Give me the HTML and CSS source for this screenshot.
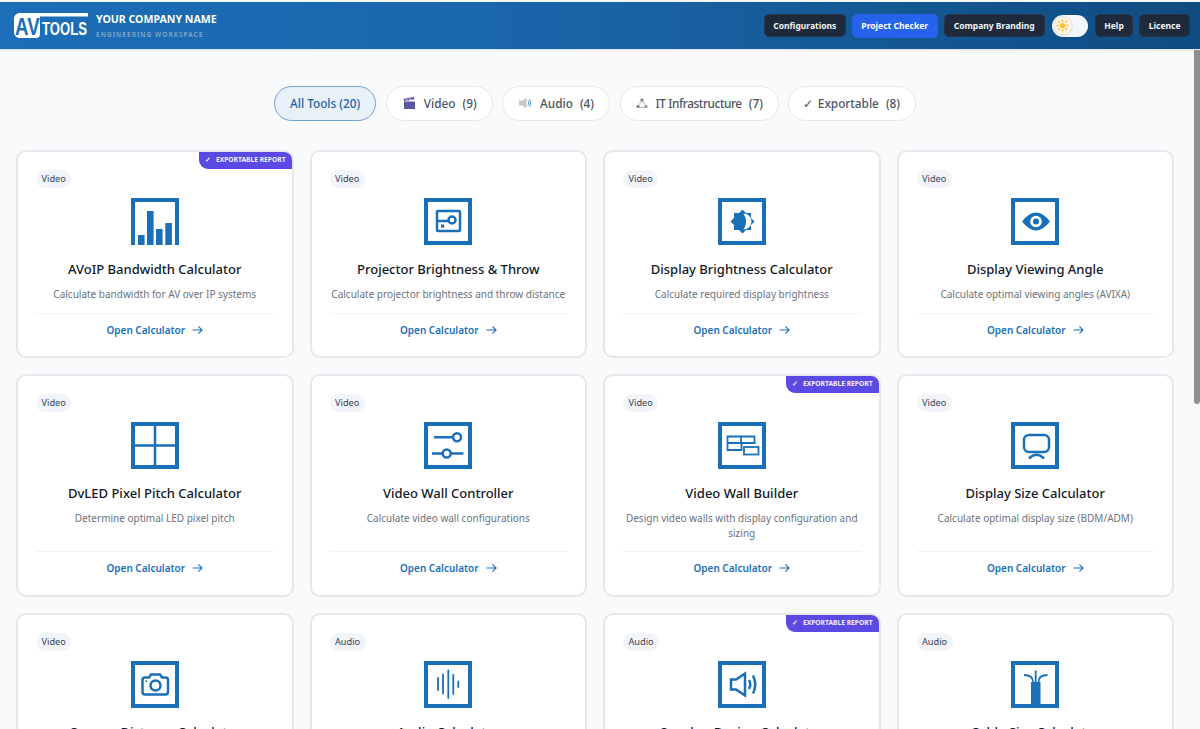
FILE: index.html
```html
<!DOCTYPE html>
<html>
<head>
    <title>AV Tools</title>
    <link rel="stylesheet" href="styles.css">
</head>
<body>
    <header class="topbar">
        <div class="brand">
            <svg class="logo" width="74" height="31" viewBox="0 -2 74 31">
                <path class="logo-shape" d="M6 1H74V4.500H26V22Q26 26 22 26H6C2.500 26 0 23.500 0 20V7C0 3.500 2.500 1 6 1Z"/>
                <text class="logo-av" transform="translate(1 23) scale(.78 1)">AV</text>
                <text class="logo-tools" transform="translate(28 22.500) scale(.73 1)">TOOLS</text>
            </svg>
            <div class="brand-text">
                <div class="company">YOUR COMPANY NAME</div>
                <div class="workspace">ENGINEERING WORKSPACE</div>
            </div>
        </div>
        <nav class="top-nav">
            <button class="nav-btn">Configurations</button>
            <button class="nav-btn nav-btn-primary">Project Checker</button>
            <button class="nav-btn nav-btn-wide">Company Branding</button>
            <div class="theme-toggle">
                <span class="theme-knob">
                    <svg width="13" height="13" viewBox="0 0 14 14"><circle cx="7" cy="7" r="2.800" fill="#fbbf24"/><path d="M7 .8V2.600M7 11.400V13.200M.8 7H2.600M11.400 7H13.200M2.600 2.600L3.900 3.900M10.100 10.100L11.400 11.400M2.600 11.400L3.900 10.100M10.100 3.900L11.400 2.600" stroke="#f59e0b" stroke-width="1.300"/></svg>
                </span>
            </div>
            <button class="nav-btn">Help</button>
            <button class="nav-btn">Licence</button>
        </nav>
    </header>

    <main class="content">
        <div class="filters">
            <button class="filter filter-active">All Tools (20)</button>
            <button class="filter">
                <svg width="14" height="14" viewBox="0 0 14 14"><path d="M2 5.500H13V13H2Z" fill="#5b5aa0"/><path d="M1.500 2.800L12 .8L12.500 3.300L2 5.300Z" fill="#6d5fb0"/><path d="M4 2.400L5.200 4.700M7.500 1.800L8.700 4" stroke="#ddd" stroke-width="1"/></svg>
                <span>Video</span><span>(9)</span>
            </button>
            <button class="filter">
                <svg width="14" height="14" viewBox="0 0 14 14"><path d="M1 4.500H4.500L8.500 1.500V12.500L4.500 9.500H1Z" fill="#c3c8cf"/><path d="M10 4.500Q11.500 7 10 9.500M11.600 3Q13.800 7 11.600 11" fill="none" stroke="#5f9bd6" stroke-width="1"/></svg>
                <span>Audio</span><span>(4)</span>
            </button>
            <button class="filter">
                <svg width="12" height="12" viewBox="0 0 12 12"><circle cx="6" cy="3" r="1.600" fill="#6b7280"/><circle cx="2" cy="9.500" r="1.600" fill="#6b7280"/><circle cx="10" cy="9.500" r="1.600" fill="#8b93a0"/><path d="M6 3L2 9.500M6 3L10 9.500M2 10.500H10" stroke="#9ca3af" stroke-width=".8" fill="none"/></svg>
                <span class="filter-long">IT Infrastructure</span><span>(7)</span>
            </button>
            <button class="filter">
                <span class="filter-check">✓</span>
                <span>Exportable</span><span>(8)</span>
            </button>
        </div>

        <div class="tool-grid">
            <article class="tool-card">
                <div class="export-badge"><span class="badge-check">✓</span>EXPORTABLE REPORT</div>
                <span class="tag">Video</span>
                <svg class="tool-icon" viewBox="0 0 48 47">
                    <path class="line thick" d="M2 47V2H46V47"/>
                    <path class="solid" d="M7 37H13.600V47H7ZM16 13H22.600V47H16ZM25 31H31.600V47H25ZM34.300 25H40.900V47H34.300Z"/>
                </svg>
                <h3>AVoIP Bandwidth Calculator</h3>
                <p>Calculate bandwidth for AV over IP systems</p>
                <a class="open-link">Open Calculator <svg class="arrow" viewBox="0 0 12 10"><path d="M.5 5H11M7 1L11 5L7 9"/></svg></a>
            </article>
            <article class="tool-card">
                <span class="tag">Video</span>
                <svg class="tool-icon" viewBox="0 0 48 47">
                    <rect class="line thick" x="2" y="2" width="44" height="43"/>
                    <rect class="line" x="13" y="13" width="23" height="20" rx="1"/>
                    <path class="line" d="M13 23H24"/>
                    <circle class="line" cx="28" cy="22" r="3.500"/>
                    <rect class="solid" x="17" y="26.500" width="3.200" height="3.200"/>
                </svg>
                <h3>Projector Brightness &amp; Throw</h3>
                <p>Calculate projector brightness and throw distance</p>
                <a class="open-link">Open Calculator <svg class="arrow" viewBox="0 0 12 10"><path d="M.5 5H11M7 1L11 5L7 9"/></svg></a>
            </article>
            <article class="tool-card">
                <span class="tag">Video</span>
                <svg class="tool-icon" viewBox="0 0 48 47">
                    <rect class="line thick" x="2" y="2" width="44" height="43"/>
                    <path class="solid" d="M24.500 11.500L28 15H33V20L36.500 23.500L33 27V32H28L24.500 35.500L21 32H16V27L12.500 23.500L16 20V15H21Z"/>
                    <path class="cut" d="M25.500 15.500A8 8 0 0 1 25.500 31.500Q30.500 23.500 25.500 15.500Z"/>
                </svg>
                <h3>Display Brightness Calculator</h3>
                <p>Calculate required display brightness</p>
                <a class="open-link">Open Calculator <svg class="arrow" viewBox="0 0 12 10"><path d="M.5 5H11M7 1L11 5L7 9"/></svg></a>
            </article>
            <article class="tool-card">
                <span class="tag">Video</span>
                <svg class="tool-icon" viewBox="0 0 48 47">
                    <rect class="line thick" x="2" y="2" width="44" height="43"/>
                    <path class="solid" d="M11 23.500Q25 5.500 39 23.500Q25 41.500 11 23.500Z"/>
                    <circle class="cut" cx="25" cy="23.500" r="5.800"/>
                    <circle class="solid" cx="25" cy="23.500" r="3"/>
                </svg>
                <h3>Display Viewing Angle</h3>
                <p>Calculate optimal viewing angles (AVIXA)</p>
                <a class="open-link">Open Calculator <svg class="arrow" viewBox="0 0 12 10"><path d="M.5 5H11M7 1L11 5L7 9"/></svg></a>
            </article>

            <article class="tool-card">
                <span class="tag">Video</span>
                <svg class="tool-icon" viewBox="0 0 48 47">
                    <rect class="line thick" x="2" y="2" width="44" height="43"/>
                    <path class="line" d="M24 3V44M3 23.500H45"/>
                </svg>
                <h3>DvLED Pixel Pitch Calculator</h3>
                <p>Determine optimal LED pixel pitch</p>
                <a class="open-link">Open Calculator <svg class="arrow" viewBox="0 0 12 10"><path d="M.5 5H11M7 1L11 5L7 9"/></svg></a>
            </article>
            <article class="tool-card">
                <span class="tag">Video</span>
                <svg class="tool-icon" viewBox="0 0 48 47">
                    <rect class="line thick" x="2" y="2" width="44" height="43"/>
                    <path class="line" d="M10 15.300H29M8 31.500H18.500M27 31.500H39.500"/>
                    <circle class="line" cx="33" cy="15.300" r="4"/>
                    <circle class="line" cx="22.700" cy="31.500" r="4"/>
                </svg>
                <h3>Video Wall Controller</h3>
                <p>Calculate video wall configurations</p>
                <a class="open-link">Open Calculator <svg class="arrow" viewBox="0 0 12 10"><path d="M.5 5H11M7 1L11 5L7 9"/></svg></a>
            </article>
            <article class="tool-card">
                <div class="export-badge"><span class="badge-check">✓</span>EXPORTABLE REPORT</div>
                <span class="tag">Video</span>
                <svg class="tool-icon" viewBox="0 0 48 47">
                    <rect class="line thick" x="2" y="2" width="44" height="43"/>
                    <path class="line thin" d="M9.500 14.500H36.500V21H23.500V28H9.500ZM9.500 21H23.500M23 14.500V21"/>
                    <rect class="line thin" x="26" y="25" width="14.500" height="7.500"/>
                </svg>
                <h3>Video Wall Builder</h3>
                <p>Design video walls with display configuration and sizing</p>
                <a class="open-link">Open Calculator <svg class="arrow" viewBox="0 0 12 10"><path d="M.5 5H11M7 1L11 5L7 9"/></svg></a>
            </article>
            <article class="tool-card">
                <span class="tag">Video</span>
                <svg class="tool-icon" viewBox="0 0 48 47">
                    <rect class="line thick" x="2" y="2" width="44" height="43"/>
                    <rect class="line" x="13" y="13" width="25" height="17" rx="5"/>
                    <path class="line" d="M18 36.500Q25.500 29 33 36.500"/>
                </svg>
                <h3>Display Size Calculator</h3>
                <p>Calculate optimal display size (BDM/ADM)</p>
                <a class="open-link">Open Calculator <svg class="arrow" viewBox="0 0 12 10"><path d="M.5 5H11M7 1L11 5L7 9"/></svg></a>
            </article>

            <article class="tool-card">
                <span class="tag">Video</span>
                <svg class="tool-icon" viewBox="0 0 48 47">
                    <rect class="line thick" x="2" y="2" width="44" height="43"/>
                    <path class="line" d="M14 16.500H18L20 13.500H29L31 16.500H34.500Q37 16.500 37 19V31Q37 33.500 34.500 33.500H14Q11.500 33.500 11.500 31V19Q11.500 16.500 14 16.500Z"/>
                    <circle class="line" cx="24.500" cy="24.500" r="5"/>
                    <circle class="solid" cx="15.300" cy="20.300" r="1"/>
                </svg>
                <h3>Camera Distance Calculator</h3>
                <p>Calculate camera placement and distance</p>
                <a class="open-link">Open Calculator <svg class="arrow" viewBox="0 0 12 10"><path d="M.5 5H11M7 1L11 5L7 9"/></svg></a>
            </article>
            <article class="tool-card">
                <span class="tag">Audio</span>
                <svg class="tool-icon" viewBox="0 0 48 47">
                    <rect class="line thick" x="2" y="2" width="44" height="43"/>
                    <path class="line thin round" d="M14 17V29M19 13.500V32.500M24.300 9.500V37M29.300 14V33M34.300 20.500V26"/>
                </svg>
                <h3>Audio Calculator</h3>
                <p>Calculate audio system requirements</p>
                <a class="open-link">Open Calculator <svg class="arrow" viewBox="0 0 12 10"><path d="M.5 5H11M7 1L11 5L7 9"/></svg></a>
            </article>
            <article class="tool-card">
                <div class="export-badge"><span class="badge-check">✓</span>EXPORTABLE REPORT</div>
                <span class="tag">Audio</span>
                <svg class="tool-icon" viewBox="0 0 48 47">
                    <rect class="line thick" x="2" y="2" width="44" height="43"/>
                    <path class="line" d="M13 18.500H18L27 12.500V34.500L18 28.500H13Z"/>
                    <path class="line" d="M31 19Q33.500 23.500 31 28M35 14.500Q39.500 23.500 35 32.500"/>
                </svg>
                <h3>Speaker Design Calculator</h3>
                <p>Design speaker layouts and coverage</p>
                <a class="open-link">Open Calculator <svg class="arrow" viewBox="0 0 12 10"><path d="M.5 5H11M7 1L11 5L7 9"/></svg></a>
            </article>
            <article class="tool-card">
                <span class="tag">Audio</span>
                <svg class="tool-icon" viewBox="0 0 48 47">
                    <rect class="line thick" x="2" y="2" width="44" height="43"/>
                    <path class="solid" d="M20 21H29.500V45H20Z"/>
                    <path class="line thin" d="M24.700 21V9.500M22 21Q22 14 13 14M27.500 21Q27.500 14 36.500 14"/>
                </svg>
                <h3>Cable Size Calculator</h3>
                <p>Calculate cable size and voltage drop</p>
                <a class="open-link">Open Calculator <svg class="arrow" viewBox="0 0 12 10"><path d="M.5 5H11M7 1L11 5L7 9"/></svg></a>
            </article>
        </div>
    </main>

    <div class="scroll-thumb"></div>
</body>
</html>
```

FILE: styles.css
```css
* {
    box-sizing: border-box;
}
html, body {
    height: 100%;
    overflow: hidden;
}
body {
    margin: 0;
    padding-top: 2px;
    font-family: "Noto Sans", "Open Sans", sans-serif;
    background-color: #f8fafc;
    color: #111827;
}
button {
    font-family: inherit;
}

/* header */
.topbar {
    height: 47px;
    display: flex;
    align-items: center;
    justify-content: space-between;
    padding: 0 10px 0 14px;
    background: linear-gradient(90deg, #1c6eb8 0%, #1a65a9 45%, #0f4c81 100%);
    box-shadow: 0 1px 3px rgba(0,0,0,0.12);
}
.brand {
    display: flex;
    align-items: center;
    gap: 8px;
}
.logo {
    display: block;
}
.logo-shape {
    fill: white;
}
.logo-av {
    font-family: "Liberation Sans", sans-serif;
    font-size: 24px;
    font-weight: 700;
    fill: #1c6eb8;
}
.logo-tools {
    font-family: "Liberation Sans", sans-serif;
    font-size: 18px;
    font-weight: 700;
    fill: white;
}
.company {
    font-size: 10.6px;
    font-weight: 700;
    line-height: 14px;
    color: white;
}
.workspace {
    margin-top: 4px;
    font-size: 6.5px;
    font-weight: 600;
    line-height: 9px;
    letter-spacing: 1.05px;
    color: #8aa9c9;
}
.top-nav {
    display: flex;
    align-items: center;
    gap: 6px;
}
.nav-btn {
    height: 23px;
    padding: 0 8.5px;
    border: 1px solid #273449;
    border-radius: 5px;
    background-color: #1e293b;
    color: #f1f5f9;
    font-size: 8.5px;
    font-weight: 700;
    white-space: nowrap;
}
.nav-btn-primary {
    height: 24px;
    border-color: #2563eb;
    background-color: #2563eb;
    color: white;
}
.nav-btn-wide {
    padding: 0 9.2px;
}
.theme-toggle {
    width: 36px;
    height: 22px;
    margin: 0 1px;
    padding: 2px;
    border-radius: 11px;
    background-color: #f3f6fa;
}
.theme-knob {
    width: 18px;
    height: 18px;
    display: flex;
    align-items: center;
    justify-content: center;
    border-radius: 50%;
    background-color: #fdf3e0;
    box-shadow: 0 0 2px rgba(0,0,0,0.25);
}

/* filters */
.content {
    padding: 37px 26px 0 16px;
}
.filters {
    display: flex;
    justify-content: center;
    gap: 9.5px;
    margin-bottom: 29px;
}
.filter {
    height: 35px;
    display: flex;
    align-items: center;
    gap: 7px;
    padding: 0 15px 1px;
    border: 1px solid #e5e7eb;
    border-radius: 18px;
    background-color: white;
    color: #4b5563;
    font-size: 11.8px;
    font-weight: 500;
    white-space: nowrap;
}
.filter svg {
    margin-right: 1px;
}
.filter-active {
    border-color: #6fa3d6;
    background-color: #e8f0f8;
    color: #1a65a9;
}
.filter-long {
    letter-spacing: -0.4px;
}
.filter-check {
    margin: 0 -2.5px 0 -1px;
}

/* cards */
.tool-grid {
    display: grid;
    grid-template-columns: repeat(4, 1fr);
    gap: 16px;
}
.tool-card {
    position: relative;
    display: flex;
    flex-direction: column;
    align-items: center;
    padding: 18px 18px 18.3px;
    border: 2px solid #e5e7eb;
    border-radius: 10px;
    background-color: white;
    overflow: hidden;
}
.export-badge {
    position: absolute;
    top: 0;
    right: 0;
    height: 17px;
    padding: 0 6px;
    border-bottom-left-radius: 9px;
    background-color: #5a4ae3;
    color: #f1f0ff;
    font-size: 6.7px;
    font-weight: 700;
    line-height: 16px;
    white-space: nowrap;
}
.badge-check {
    margin-right: 5px;
}
.tag {
    align-self: flex-start;
    height: 18px;
    padding: 0 5.5px;
    border-radius: 9px;
    background-color: #f1f5f9;
    color: #374151;
    font-size: 9.2px;
    line-height: 18px;
}
.tool-icon {
    width: 48px;
    height: 47px;
    margin-top: 10px;
    fill: none;
    stroke: #1a6fb9;
}
.tool-icon .line {
    fill: none;
    stroke-width: 2.5;
}
.tool-icon .thick {
    stroke-width: 4;
}
.tool-icon .thin {
    stroke-width: 1.8;
}
.tool-icon .round {
    stroke-linecap: round;
}
.tool-icon .solid {
    fill: #1a6fb9;
    stroke: none;
}
.tool-icon .cut {
    fill: white;
    stroke: none;
}
.tool-card h3 {
    margin: 14px 0 0;
    font-size: 13px;
    font-weight: 500;
    line-height: 20px;
    text-align: center;
    color: #111827;
}
.tool-card p {
    margin: 8px 0 11px;
    font-size: 10px;
    line-height: 14.7px;
    text-align: center;
    color: #6b7280;
}
.open-link {
    width: 100%;
    margin-top: auto;
    display: flex;
    align-items: center;
    justify-content: center;
    gap: 7px;
    padding-top: 8px;
    border-top: 1px solid #f1f2f4;
    color: #1a6fb9;
    font-size: 10px;
    font-weight: 600;
    line-height: 16px;
}
.arrow {
    width: 11px;
    height: 10px;
    fill: none;
    stroke: #1a6fb9;
    stroke-width: 1.2;
}

/* page scrollbar drawn over the content */
.scroll-thumb {
    position: absolute;
    top: 50px;
    right: 0;
    width: 6px;
    height: 354px;
    border-radius: 0 0 3px 3px;
    background-color: #8f8f8f;
}
```
